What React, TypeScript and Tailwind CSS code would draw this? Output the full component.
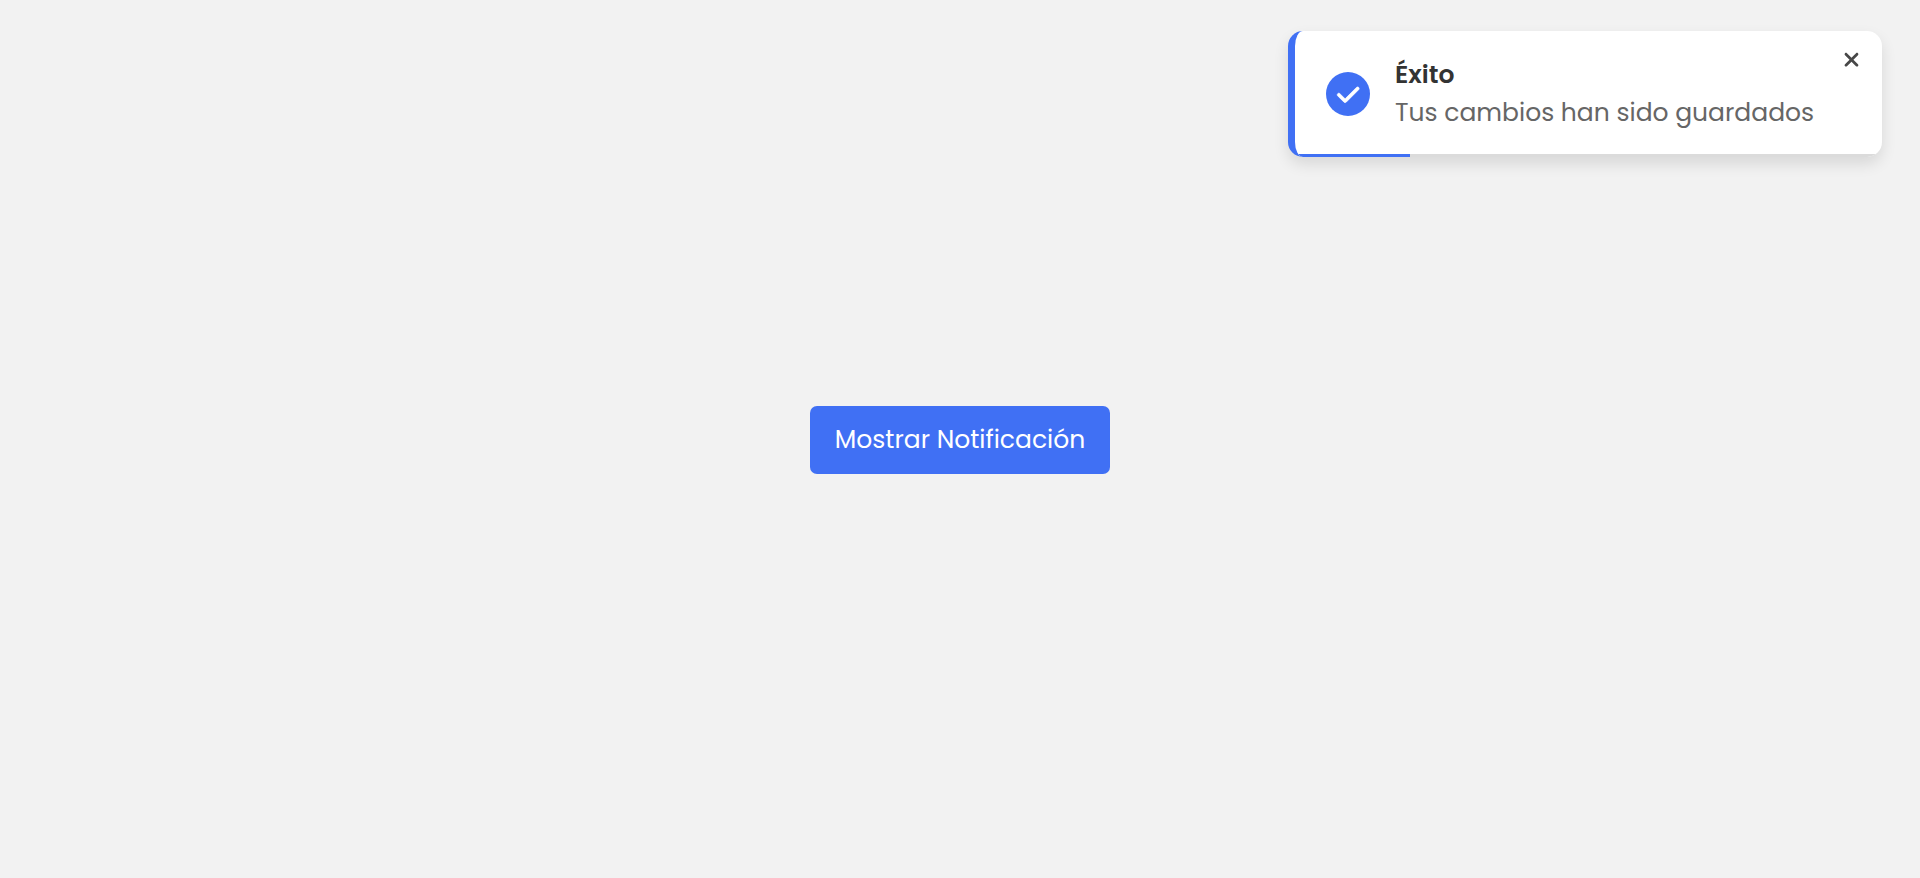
import { useState } from "react";

function CheckIcon() {
  return (
    <svg viewBox="6 -6 512 512" className="size-[25px]" fill="currentColor" stroke="currentColor" strokeWidth="14" aria-hidden="true">
      <path d="M470.6 105.4c12.5 12.5 12.5 32.8 0 45.3l-256 256c-12.5 12.5-32.8 12.5-45.3 0l-128-128c-12.5-12.5-12.5-32.8 0-45.3s32.8-12.5 45.3 0L192 338.7 425.4 105.4c12.5-12.5 32.8-12.5 45.3 0z" />
    </svg>
  );
}

function CloseIcon() {
  return (
    <svg viewBox="12 6 320 512" className="h-[22px] w-[14px]" overflow="visible" fill="currentColor" aria-hidden="true">
      <path d="M310.6 150.6c12.5-12.5 12.5-32.8 0-45.3s-32.8-12.5-45.3 0L160 210.7 54.6 105.4c-12.5-12.5-32.8-12.5-45.3 0s-12.5 32.8 0 45.3L114.7 256 9.4 361.4c-12.5 12.5-12.5 32.8 0 45.3s32.8 12.5 45.3 0L160 301.3 265.4 406.6c12.5 12.5 32.8 12.5 45.3 0s12.5-32.8 0-45.3L205.3 256 310.6 150.6z" />
    </svg>
  );
}

function Toast({ title, message, onClose }: { title: string; message: string; onClose: () => void }) {
  return (
    <div
      role="status"
      className="absolute top-[31px] right-[38px] flex h-[126px] w-[594px] items-center overflow-hidden rounded-[15px] border-l-[7px] border-[#4070f4] bg-white pl-[31px] shadow-[0_7px_15px_rgba(0,0,0,0.11)]"
    >
      <span className="flex size-11 shrink-0 items-center justify-center rounded-full bg-[#4070f4] text-white">
        <CheckIcon />
      </span>
      <div className="ml-[25px] flex flex-col whitespace-nowrap text-[25px] leading-[38px]">
        <span className="font-semibold text-[#333]">{title}</span>
        <span className="text-[#666]">{message}</span>
      </div>
      <button
        type="button"
        aria-label="Cerrar"
        onClick={onClose}
        className="absolute top-[16px] right-[18px] flex size-[25px] cursor-pointer items-center justify-center text-[#484848]"
      >
        <CloseIcon />
      </button>
      <div className="absolute bottom-0 left-0 h-[3px] w-full bg-[#dbdbdb]">
        <div className="h-full w-[115px] bg-[#4070f4]" />
      </div>
    </div>
  );
}

export default function App() {
  const [open, setOpen] = useState(true);
  return (
    <div className="relative flex h-[878px] w-full items-center justify-center overflow-hidden bg-[#f2f2f2] font-['Poppins','Inter',sans-serif]">
      {open && (
        <Toast title="Éxito" message="Tus cambios han sido guardados" onClose={() => setOpen(false)} />
      )}
      <button
        type="button"
        onClick={() => setOpen(true)}
        className="mt-[2px] flex h-[68px] w-[300px] cursor-pointer items-center justify-center whitespace-nowrap rounded-[7px] bg-[#4070f4] text-[25px] text-white"
      >
        Mostrar Notificación
      </button>
    </div>
  );
}
